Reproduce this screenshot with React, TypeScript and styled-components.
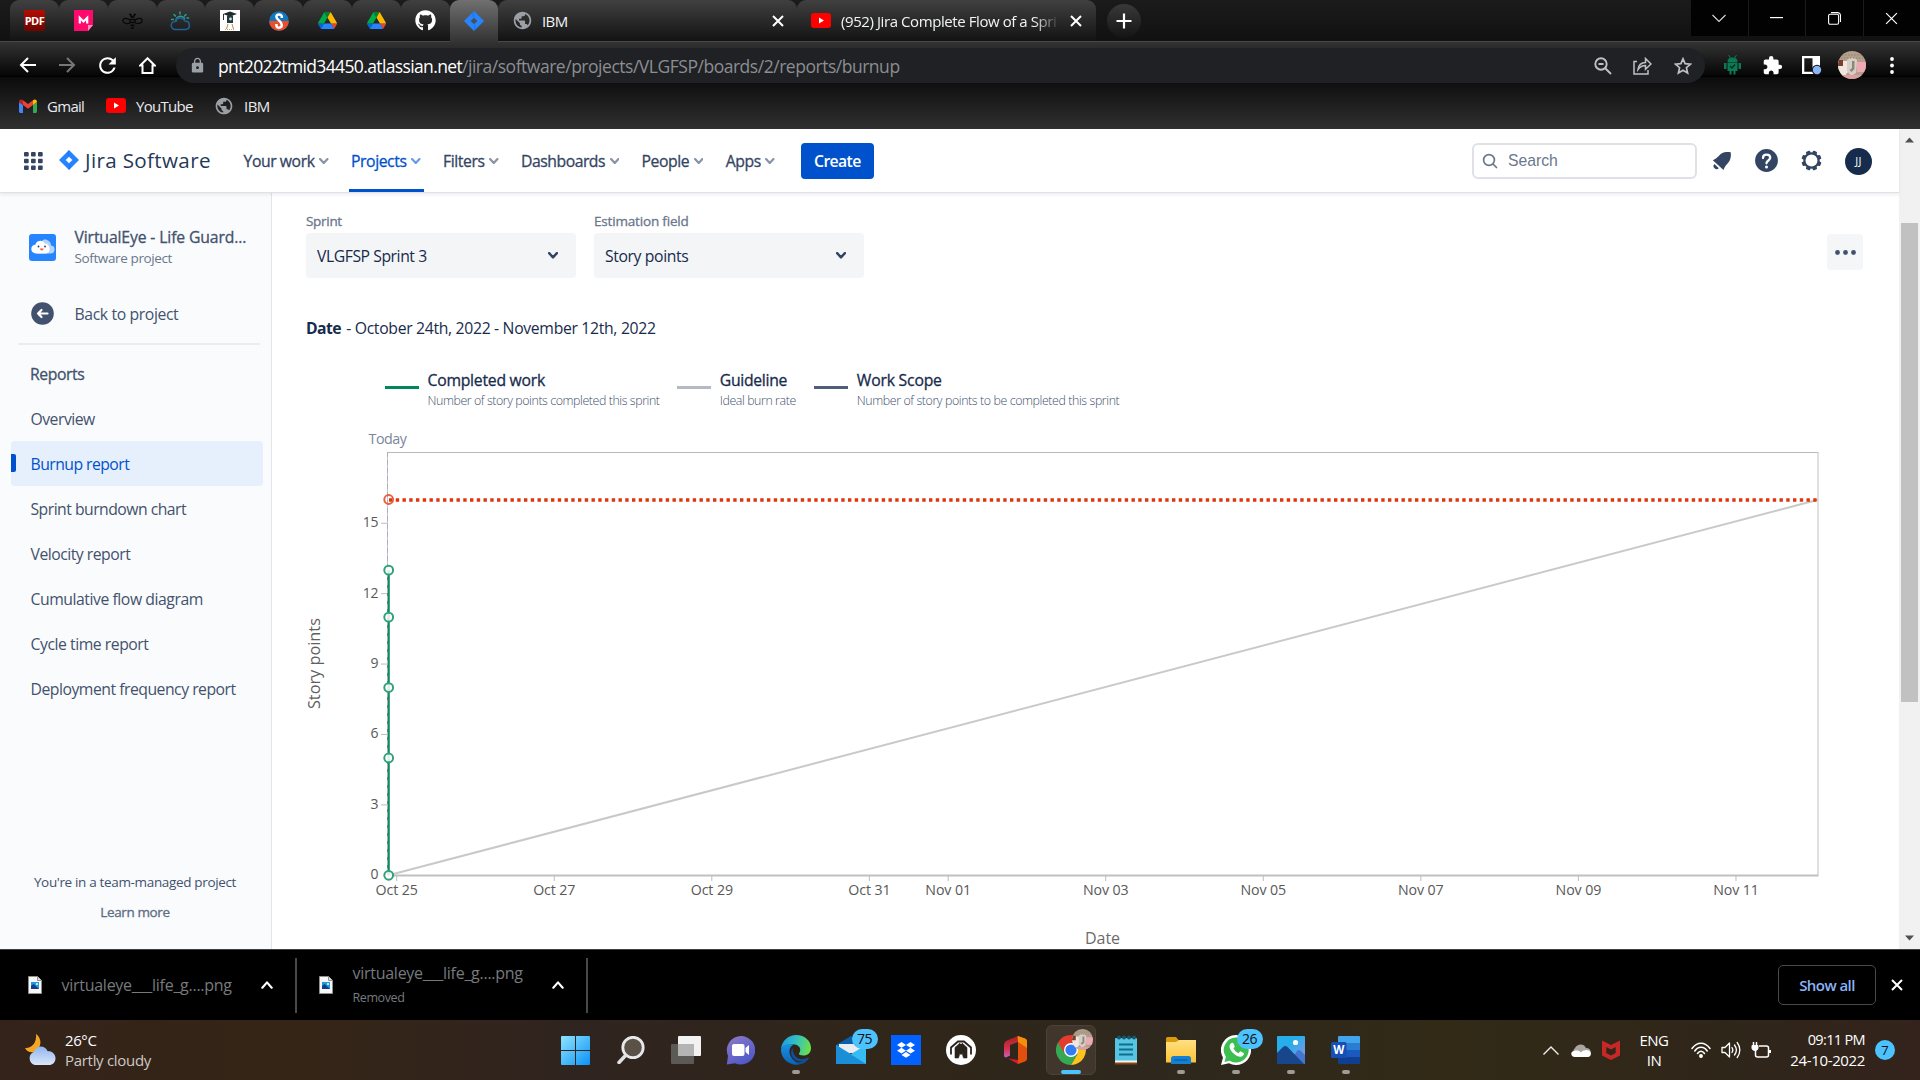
import React from 'react';
import styled, { createGlobalStyle } from 'styled-components';
import { FaGithub } from 'react-icons/fa';
import { MdExtension, MdLock, MdRefresh, MdPublic } from 'react-icons/md';

const GlobalStyle = createGlobalStyle`
  *{box-sizing:border-box}
  body{margin:0;background:#fff;overflow:hidden;font-family:"Open Sans","Noto Sans",sans-serif}
  svg{display:block;flex:none}
`;

const Screen = styled.div`width:1920px;height:1080px;display:flex;flex-direction:column;overflow:hidden;`;

const Text = styled.span<{ size?: number; ls?: number; weight?: number; color?: string }>`
  font-size:${p => p.size ?? 15.75}px;
  letter-spacing:${p => p.ls ?? 0}px;
  font-weight:${p => p.weight ?? 400};
  -webkit-text-stroke:${p => (p.weight === 500 ? 0.3 : 0)}px;
  color:${p => p.color ?? '#42526E'};
  white-space:pre;
  line-height:20px;
`;

/* ---------- Browser chrome ---------- */
const TabStrip = styled.div`
  height:42px;display:flex;align-items:stretch;padding-left:10px;
  background:linear-gradient(#1b1b1b,#111);border-bottom:1px solid #474747;
`;
const PinnedTab = styled.div<{ active?: boolean; last?: boolean }>`
  width:48.85px;display:flex;align-items:center;justify-content:center;position:relative;
  border-radius:9px 9px 0 0;height:${p => (p.active ? 42 : 41)}px;
  background:${p => (p.active ? 'linear-gradient(#707070,#333)' : 'linear-gradient(#404040,#131313)')};
  &::after{content:'';display:${p => (p.active || p.last ? 'none' : 'block')};position:absolute;right:-1px;top:9px;width:1px;height:26px;background:#646464}
`;
const WideTab = styled.div<{ divided?: boolean }>`
  width:298.6px;display:flex;align-items:center;padding:0 13.5px 0 14px;position:relative;height:41px;
  border-radius:9px 9px 0 0;background:linear-gradient(#404040,#131313);
  &::after{content:'';display:${p => (p.divided ? 'block' : 'none')};position:absolute;right:-1px;top:9px;width:1px;height:26px;background:#646464}
`;
const TabTitle = styled.div<{ fade?: boolean }>`
  width:219px;margin-left:${p => (p.fade ? 10 : 8.5)}px;overflow:hidden;display:flex;
  mask-image:${p => (p.fade ? 'linear-gradient(90deg,#000 88%,transparent)' : 'none')};
`;
const TabClose = styled.div`margin-left:auto;`;
const NewTab = styled.div`
  width:34px;height:34px;border-radius:50%;margin:4px 0 0 11px;display:flex;align-items:center;justify-content:center;
  background:linear-gradient(#393939,#141414);
`;
const WindowControls = styled.div`margin-left:auto;display:flex;gap:1px;height:36px;background:#1b1b1b;`;
const WindowButton = styled.div`width:56.5px;background:#020202;display:flex;align-items:center;justify-content:center;`;

const Toolbar = styled.div`
  height:35px;display:flex;align-items:center;background:linear-gradient(#333,#050505);
  border-bottom:1px solid #000;padding:12px 0 0 7.5px;
`;
const ToolSlot = styled.div`width:40px;height:40px;display:flex;align-items:center;justify-content:center;position:relative;`;
const UrlBar = styled.div`
  height:35px;width:1529px;margin:1px 0 0 8px;border-radius:18px;background:#202124;
  display:flex;align-items:center;position:relative;padding-left:13.5px;flex:none;
`;
const UrlText = styled.div`display:flex;margin-left:12px;`;
const UrlActions = styled.div`margin-left:auto;display:flex;margin-right:2px;`;
const Extensions = styled.div`display:flex;margin-left:7.5px;`;
const Bookmarks = styled.div`
  height:52px;display:flex;align-items:center;padding:5px 0 0 19px;
  background:linear-gradient(#0b0b0b,#303030);
`;
const Bookmark = styled.div<{ w: number }>`width:${p => p.w}px;display:flex;align-items:center;gap:10px;`;
const ProfilePhoto = styled.div<{ d: number }>`
  width:${p => p.d}px;height:${p => p.d}px;border-radius:50%;overflow:hidden;flex:none;
`;

/* ---------- Jira ---------- */
const Viewport = styled.div`height:820px;display:flex;background:#fff;`;
const Site = styled.div`width:1899px;display:flex;flex-direction:column;`;
const Header = styled.header`
  height:64px;display:flex;align-items:center;padding-left:24px;position:relative;z-index:1;background:#fff;
  border-bottom:1px solid #DFE1E6;box-shadow:0 2px 3px rgba(9,30,66,.07);
`;
const Brand = styled.div`display:flex;align-items:center;gap:6px;margin:0 0 1px 16px;width:182px;`;
const Nav = styled.nav`display:flex;height:63px;gap:16.5px;`;
const NavItem = styled.div<{ active?: boolean }>`
  display:flex;align-items:center;gap:4.5px;padding:4px 3.5px 0 2.5px;height:63px;
  border-bottom:3px solid ${p => (p.active ? '#0052CC' : 'transparent')};
`;
const CreateButton = styled.div`
  width:73px;height:36px;border-radius:4px;background:#0052CC;display:flex;align-items:center;justify-content:center;margin-left:22.5px;
`;
const SearchBox = styled.div`
  width:225px;height:36px;border:2px solid #DFE1E6;border-radius:6px;display:flex;align-items:center;
  gap:10px;padding-left:8px;margin-left:auto;font-family:"Liberation Sans",Arial,sans-serif;
`;
const HeaderIcons = styled.div`display:flex;margin-left:3px;`;
const HeaderIcon = styled.div`width:44.7px;height:36px;display:flex;align-items:center;justify-content:center;`;
const UserBadge = styled.div`
  width:27px;height:27px;border-radius:50%;background:#172B4D;display:flex;align-items:center;justify-content:center;
  margin:1px 27px 0 11px;
`;

const Body = styled.div`height:756px;display:flex;`;
const Sidebar = styled.aside`
  width:272px;background:#FAFBFC;border-right:1px solid #E3E4E8;display:flex;flex-direction:column;padding:27px 8px 0 11px;
`;
const ProjectHead = styled.div`display:flex;height:54px;padding:1px 0 0 18px;align-items:center;gap:18.5px;`;
const ProjectNames = styled.div`display:flex;flex-direction:column;gap:1.5px;`;
const BackRow = styled.div`display:flex;align-items:center;gap:20.5px;height:44px;margin-top:17.5px;padding-left:20px;`;
const Divider = styled.div`height:2px;background:#EBECF0;margin:7.5px 3px 0 7px;`;
const SideTitle = styled.div`height:45px;display:flex;align-items:center;padding-left:19px;margin:6px 0 0;`;
const SideItem = styled.div<{ active?: boolean }>`
  height:45px;display:flex;align-items:center;padding-left:19.5px;border-radius:4px;position:relative;
  background:${p => (p.active ? '#E6EFFC' : 'transparent')};
  &::before{content:'';display:${p => (p.active ? 'block' : 'none')};position:absolute;left:0;top:13px;width:5px;height:18px;background:#0052CC;border-radius:0 2px 2px 0}
`;
const SideFooter = styled.div`margin-top:auto;display:flex;flex-direction:column;align-items:center;gap:10px;padding:0 4px 27px 0;`;

const Main = styled.main`flex:1;padding:18px 36px 0 34px;display:flex;flex-direction:column;overflow:hidden;`;
const Filters = styled.div`display:flex;gap:18px;height:67px;`;
const Field = styled.div`width:270px;display:flex;flex-direction:column;gap:2px;`;
const Select = styled.div`
  height:45px;border-radius:4px;background:#F4F5F7;display:flex;align-items:center;justify-content:space-between;padding:0 18px 0 11px;
`;
const MoreButton = styled.div`
  width:36px;height:36px;border-radius:4px;background:#F5F6F8;margin:23px 0 0 auto;display:flex;align-items:center;justify-content:center;
`;
const DateLine = styled.div`height:20px;display:flex;gap:1.5px;margin-top:40px;`;
const Legend = styled.div`display:flex;height:50px;margin:32px 0 0 79px;`;
const LegendItem = styled.div<{ w: number }>`display:flex;width:${p => p.w}px;`;
const Swatch = styled.div<{ c: string }>`width:34px;height:3px;background:${p => p.c};margin:16px 8.5px 0 0;flex:none;`;
const LegendText = styled.div`display:flex;flex-direction:column;gap:.5px;`;
const ChartWrap = styled.div`margin:4px 0 0 -6px;height:525px;overflow:hidden;`;

const ScrollTrack = styled.div`
  width:21px;background:#F1F1F1;display:flex;flex-direction:column;align-items:center;justify-content:space-between;padding:8px 0;
`;
const ScrollThumb = styled.div`width:17px;height:479px;background:#C1C1C1;margin-bottom:154px;`;

/* ---------- Downloads shelf ---------- */
const Shelf = styled.div`height:71px;background:#000;border-top:1px solid #3c4043;display:flex;align-items:center;`;
const Download = styled.div<{ w: number; pad: number }>`
  width:${p => p.w}px;height:55px;padding-left:${p => p.pad}px;border-right:2px solid #494949;display:flex;align-items:center;
`;
const DownloadText = styled.div`width:199px;margin-left:19.5px;display:flex;flex-direction:column;gap:5px;`;
const ShowAll = styled.div`
  width:98px;height:40px;border:1px solid #47494d;border-radius:5px;margin:0 15px 0 auto;display:flex;align-items:center;justify-content:center;
`;
const ShelfClose = styled.div`width:29px;`;

/* ---------- Taskbar ---------- */
const Taskbar = styled.div`
  height:60px;display:flex;align-items:center;
  background:linear-gradient(90deg,#33231a 0,#352516 15%,#302420 30%,#302619 48%,#2d271d 60%,#322a17 75%,#2f261a 90%,#33231c 100%);
`;
const Weather = styled.div`width:548px;display:flex;align-items:center;padding-left:25px;gap:9px;`;
const Lines = styled.div<{ align?: string }>`display:flex;flex-direction:column;align-items:${p => p.align ?? 'flex-start'};`;
const Apps = styled.div`display:flex;width:825px;`;
const AppSlot = styled.div<{ active?: boolean }>`
  width:50px;height:50px;margin:0 2.5px;border-radius:6px;display:flex;align-items:center;justify-content:center;position:relative;
  background:${p => (p.active ? '#40362b' : 'transparent')};
  border:1px solid ${p => (p.active ? '#4b4136' : 'transparent')};
`;
const RunMark = styled.div<{ wide?: boolean }>`
  position:absolute;bottom:0;width:${p => (p.wide ? 20 : 8)}px;height:4px;border-radius:2px;background:${p => (p.wide ? '#4CC2FF' : '#9e9a95')};
`;
const CountBadge = styled.div`
  position:absolute;top:3px;right:-3px;width:26px;height:20px;border-radius:10px;background:#4CC2FF;display:flex;align-items:center;justify-content:center;
`;
const PhotoBadge = styled.div`position:absolute;top:3px;right:2px;`;
const Tray = styled.div`margin-left:auto;display:flex;align-items:center;`;
const TraySlot = styled.div<{ w: number; end?: boolean }>`width:${p => p.w}px;display:flex;justify-content:${p => (p.end ? 'flex-end' : 'center')};`;
const Notice = styled.div`
  width:20px;height:20px;border-radius:50%;background:#4CC2FF;margin:0 25px 0 10px;display:flex;align-items:center;justify-content:center;
`;

/* ---------- Icons ---------- */
const Cross = ({ s = 11, w = 2, c = '#fff' }) => (
  <svg width={s} height={s} viewBox="0 0 12 12" stroke={c} strokeWidth={w}><path d="M1 1 11 11M11 1 1 11" /></svg>
);
const Chevron = ({ c = '#8993A4', up = false, s = 9.5, w = 2.1 }) => (
  <svg width={s} height={s * 0.67} viewBox="0 0 9 6" fill="none" stroke={c} strokeWidth={w} strokeLinecap="round" strokeLinejoin="round">
    <path d={up ? 'M1 5 4.5 1 8 5' : 'M1 1 4.5 4.8 8 1'} />
  </svg>
);
const PdfIcon = () => (
  <svg width="21" height="21" viewBox="0 0 21 21">
    <defs><linearGradient id="pdf" x2="0" y2="1"><stop stopColor="#b50d02" /><stop offset="1" stopColor="#6e0400" /></linearGradient></defs>
    <rect width="21" height="21" rx="2" fill="url(#pdf)" />
    <text x="10.5" y="15" textAnchor="middle" fontSize="11" fontWeight="700" fill="#fff" letterSpacing="-.5">PDF</text>
  </svg>
);
const MIcon = () => (
  <svg width="21" height="21" viewBox="0 0 21 21">
    <path d="M1 0h19v15l-5 6H1z" fill="#ff0a6c" /><path d="M20 15h-5v6z" fill="#ff8fb8" />
    <path d="M6.800 13.500V7.800l3.700 3.700 3.700-3.700v5.700" fill="none" stroke="#fff" strokeWidth="2.200" />
  </svg>
);
const BeeIcon = () => (
  <svg width="21" height="16" viewBox="0 0 21 16" fill="none" stroke="#080808" strokeWidth="1.300">
    <ellipse cx="4.5" cy="8" rx="3.700" ry="2.400" transform="rotate(12 4.500 8)" /><ellipse cx="16.500" cy="8" rx="3.700" ry="2.400" transform="rotate(-12 16.500 8)" />
    <path d="M8 6.500h5M8 9.500h5M8.500 12.300h4M9 15h3M8.500 3.800h4M7.500.800l2 2M13.500.800l-2 2" strokeWidth="1.700" />
  </svg>
);
const SunCloudIcon = () => (
  <svg width="21" height="20" viewBox="0 0 21 20" fill="none" strokeWidth="1.500" strokeLinecap="round">
    <path d="M6 10a4.600 4.600 0 0 1 8.500-2.500M10 1v2M4 3.500l1.400 1.400M16 3.500l-1.400 1.400M1.500 8.500h1.800M17 7h1.600" stroke="#2a9d8f" />
    <path d="M5.500 18.500a4 4 0 0 1-.5-8 5.500 5.500 0 0 1 10-.5 4.300 4.300 0 0 1 1 8.500z" stroke="#1f6299" />
  </svg>
);
const GradIcon = () => (
  <svg width="20" height="21" viewBox="0 0 20 21">
    <rect width="20" height="21" fill="#fff" /><path d="M3 4l7-2.500L17 4l-7 2.500z" fill="#1f2b2b" />
    <path d="M7 5.500h6V13H7z" fill="#243a3c" /><path d="M3.500 4v6" stroke="#243a3c" /><circle cx="10.500" cy="9" r="1.400" fill="#cfe7e4" />
    <path d="M8 14l-1.500 5M12 14l1.500 5" stroke="#b98a54" /><path d="M5 19.500h10" stroke="#d9a35c" strokeDasharray="1 1" />
  </svg>
);
const SIcon = () => (
  <svg width="20" height="20" viewBox="0 0 20 20">
    <circle cx="10" cy="10" r="9.800" fill="#1377bd" /><path d="M.2 10a9.800 9.800 0 0 0 19.600 0z" fill="#e8502c" />
    <path d="M12.800 7V5.500C12.800 2.700 7.400 2.700 7.400 5.700 7.400 9 12.800 10 12.800 14c0 3.500-5.400 3.500-5.400.5v-1.500" fill="none" stroke="#fff" strokeWidth="2.500" />
  </svg>
);
const DriveIcon = () => (
  <svg width="19" height="17" viewBox="0 0 87.300 78">
    <path d="m6.600 66.850 3.850 6.650c.8 1.400 1.950 2.500 3.300 3.300l13.750-23.800h-27.500c0 1.550.4 3.100 1.200 4.500z" fill="#0066da" />
    <path d="m43.650 25-13.750-23.800c-1.350.8-2.500 1.900-3.300 3.300l-25.400 44a9.060 9.060 0 0 0 -1.200 4.500h27.500z" fill="#00ac47" />
    <path d="m73.550 76.800c1.350-.8 2.500-1.900 3.300-3.300l1.600-2.750 7.650-13.250c.8-1.400 1.200-2.950 1.200-4.500h-27.500l5.850 11.500z" fill="#ea4335" />
    <path d="m43.650 25 13.750-23.800c-1.350-.8-2.900-1.200-4.500-1.200h-18.500c-1.600 0-3.150.45-4.500 1.200z" fill="#00832d" />
    <path d="m59.800 53h-32.300l-13.750 23.800c1.350.8 2.900 1.200 4.500 1.200h50.800c1.600 0 3.150-.45 4.500-1.200z" fill="#2684fc" />
    <path d="m73.400 26.500-12.700-22c-.8-1.400-1.950-2.500-3.300-3.300l-13.750 23.800 16.150 28h27.450c0-1.550-.4-3.100-1.200-4.500z" fill="#ffba00" />
  </svg>
);
const JiraMark = ({ s = 20, hole = '#fff' }) => (
  <svg width={s} height={s} viewBox="0 0 20 20">
    <path d="M10 0 20 10 10 20 0 10z" fill="#2684FF" />
    <path d="M10 6.500c-2-2-2-4.500 0-6.500v6.500z" fill="#1a6be0" opacity=".6" /><path d="M10 13.500c2 2 2 4.500 0 6.500z" fill="#1a6be0" opacity=".6" />
    <path d="M10 6.700 13.300 10 10 13.300 6.700 10z" fill={hole} />
  </svg>
);
const YouTubeIcon = () => (
  <svg width="20" height="15" viewBox="0 0 20 15"><rect width="20" height="15" rx="3" fill="#f00" /><path d="M8 4.500l5 3-5 3z" fill="#fff" /></svg>
);
const GmailIcon = () => (
  <svg width="18" height="14" viewBox="0 0 18 14">
    <path d="M0 3v9.500C0 13.300.7 14 1.500 14H4V6z" fill="#4285f4" /><path d="M18 3v9.500c0 .8-.7 1.500-1.500 1.500H14V6z" fill="#34a853" />
    <path d="M4 1.200 9 5l5-3.800V6L9 9.800 4 6z" fill="#ea4335" /><path d="M0 3C0 .5 2.300-.2 4 1.200V6L0 3z" fill="#c5221f" />
    <path d="M18 3c0-2.500-2.300-3.200-4-1.800V6l4-3z" fill="#fbbc04" />
  </svg>
);
const Face = ({ d }: { d: number }) => (
  <ProfilePhoto d={d}>
    <svg width={d} height={d} viewBox="0 0 28 28">
      <rect width="28" height="28" fill="#b3a08c" /><path d="M0 10h9l2 10-7 8H0z" fill="#efe6e0" /><path d="M0 9h5v6H0z" fill="#7a3f2c" />
      <path d="M18 11h10v10h-9z" fill="#efa9b4" /><path d="M9 9c3-3 7-3 10 0l-1 13-5 3-4-5z" fill="#d6cfc6" />
      <path d="M14 10h2.500v8l-3 3-2-2 2.500-2z" fill="#8f8678" /><path d="M4 24h20v4H4z" fill="#dca0a4" />
      <path d="M4 4h20M3 7h22" stroke="#938069" strokeDasharray="1.500 1.500" />
    </svg>
  </ProfilePhoto>
);
const ImageFileIcon = () => (
  <svg width="14" height="18" viewBox="0 0 14 18">
    <path d="M.5.500h9l4 4v13H.5z" fill="#f7f7f7" stroke="#8f8f8f" /><path d="M9.500.500v4h4" fill="#ddd" stroke="#8f8f8f" />
    <rect x="3" y="6" width="8" height="7" fill="#1d9be0" /><path d="M3 13V10l2.500-2L11 13z" fill="#153f82" /><circle cx="9" cy="8" r="1" fill="#fff" />
  </svg>
);

const navItems: [string, number][] = [['Your work', -0.43], ['Projects', -0.42], ['Filters', -0.42], ['Dashboards', -0.48], ['People', -0.42], ['Apps', -0.42]];
const sideItems: [string, number][] = [
  ['Overview', -0.5], ['Burnup report', -0.54], ['Sprint burndown chart', -0.52], ['Velocity report', -0.5],
  ['Cumulative flow diagram', -0.45], ['Cycle time report', -0.46], ['Deployment frequency report', -0.49],
];
const pinned = [PdfIcon, MIcon, BeeIcon, SunCloudIcon, GradIcon, SIcon, DriveIcon, DriveIcon, () => <FaGithub size={21} color="#fff" />];

const Burnup = () => {
  // viewBox uses the page grid, so data coordinates map straight to pixels
  const y = (v: number) => 875.3 - v * 23.47;
  const x = (day: number) => 396.7 + day * 78.78;
  const xTicks: [string, number][] = [['Oct 25', 0], ['Oct 27', 2], ['Oct 29', 4], ['Oct 31', 6], ['Nov 01', 7], ['Nov 03', 9], ['Nov 05', 11], ['Nov 07', 13], ['Nov 09', 15], ['Nov 11', 17]];
  return (
    <svg width="1540" height="525" viewBox="300 424 1540 525" fill="none">
      <text x="387.500" y="443.500" textAnchor="middle" fontSize="14.300" letterSpacing="-.5" fill="#7A869A">Today</text>
      <path d="M387.500 452.500H1818.500" stroke="#b9b9b9" />
      <path d="M1818 452.500V875" stroke="#d6d6d6" strokeWidth="1.500" />
      <path d="M387 875.500H1818.500" stroke="#c0c0c0" strokeWidth="2" />
      <path d="M387.500 452V875" stroke="#c4c6ca" />
      <path d={`M388.500 ${y(0)}L1818 ${y(16)}`} stroke="#c9c9c9" strokeWidth="2" />
      <path d={`M388.500 ${y(13)}V${y(0)}`} stroke="#12895f" strokeWidth="2.600" />
      <path d="M387.500 452V875" stroke="#a9afba" strokeDasharray="5 3" />
      <path d={`M389 ${y(16) + 0.2}H1818`} stroke="#DE350B" strokeWidth="3.300" strokeDasharray="3.375 3.375" />
      {[0, 5, 8, 11, 13].map(v => (
        <circle key={v} cx="388.700" cy={y(v)} r="4.400" fill="#fff" fillOpacity=".85" stroke="#2fa27b" strokeWidth="2" />
      ))}
      <circle cx="388.700" cy={y(16) - 0.3} r="4.400" stroke="#e8603f" strokeWidth="2" />
      {[0, 3, 6, 9, 12, 15].map(v => (
        <g key={v}>
          {v > 0 && <path d={`M381 ${y(v)}h6`} stroke="#bdbdbd" />}
          <text x="378" y={y(v) + 4} textAnchor="end" fontSize="14" letterSpacing="-.4" fill="#595959">{v}</text>
        </g>
      ))}
      {xTicks.map(([label, d]) => (
        <g key={label}>
          <path d={`M${x(d)} 876v5`} stroke="#bdbdbd" />
          <text x={x(d)} y="895" textAnchor="middle" fontSize="14.200" letterSpacing="-.1" fill="#595959">{label}</text>
        </g>
      ))}
      <text transform="translate(320 663.600) rotate(-90)" textAnchor="middle" fontSize="16.300" fill="#5f5f5f">Story points</text>
      <text x="1102.500" y="943.500" textAnchor="middle" fontSize="16" fill="#6b6b6b">Date</text>
    </svg>
  );
};

const appIcons: { key: string; icon: React.ReactNode; run?: boolean; active?: boolean; count?: string }[] = [
  { key: 'start', icon: (
    <svg width="29" height="29" viewBox="0 0 29 29">
      <defs><linearGradient id="win" x2="1" y2="1"><stop stopColor="#8fe4ff" /><stop offset="1" stopColor="#0a93f5" /></linearGradient></defs>
      <path d="M0 1a1 1 0 0 1 1-1h13v14H0zM15 0h13a1 1 0 0 1 1 1v13H15zM0 15h14v14H1a1 1 0 0 1-1-1zM15 15h14v13a1 1 0 0 1-1 1H15z" fill="url(#win)" />
    </svg>) },
  { key: 'search', icon: (
    <svg width="28" height="28" viewBox="0 0 28 28"><circle cx="16" cy="11.500" r="10.200" fill="#5a5147" stroke="#e6e8ea" strokeWidth="2.800" /><path d="M8.500 19.500 2 26.500" stroke="#dfe2e5" strokeWidth="3.500" strokeLinecap="round" /></svg>) },
  { key: 'views', icon: (
    <svg width="30" height="28" viewBox="0 0 30 28"><rect y="8" width="23" height="20" rx="1" fill="#5c5a57" /><rect x="7" width="23" height="20" rx="1" fill="#f2f2f2" /><path d="M7 8h16v12H7z" fill="#b4b4b4" /></svg>) },
  { key: 'chat', icon: (
    <svg width="29" height="29" viewBox="0 0 29 29">
      <defs><linearGradient id="chat" x2=".6" y2="1"><stop stopColor="#8f7ac5" /><stop offset="1" stopColor="#5059c9" /></linearGradient></defs>
      <path d="M15 0a14.300 14.300 0 1 1-6 27.300L.8 28.500 2 20A14.300 14.300 0 0 1 15 0z" fill="url(#chat)" />
      <rect x="6" y="8" width="12.500" height="12" rx="2" fill="#fff" /><path d="M19.500 12 23 9v10l-3.500-3z" fill="#fff" />
    </svg>) },
  { key: 'edge', run: true, icon: (
    <svg width="30" height="30" viewBox="0 0 30 30">
      <defs>
        <linearGradient id="eg" x1="0" y1=".3" x2="1" y2=".5"><stop stopColor="#1b9de2" /><stop offset=".5" stopColor="#35c1c0" /><stop offset="1" stopColor="#6be04a" /></linearGradient>
        <linearGradient id="eb" x2="0" y2="1"><stop stopColor="#1793e6" /><stop offset="1" stopColor="#0b63b5" /></linearGradient>
      </defs>
      <path d="M0 14C1 5 8 0 15 0c9 0 15 6 15 13 0 5-3.500 7.500-7.500 7.500-3 0-5-1-4.500-2 2.500-3 1.500-8-4-9C8 8.500 2 10 0 14z" fill="url(#eg)" />
      <path d="M0 14c2-4.500 8-6 13-4.500-3 1-5 4-4.500 8 .8 6 6 10 11 11.500A15 15 0 0 1 0 14z" fill="url(#eb)" />
      <path d="M11.500 13c-4 6 1 14 9 13.500 3 0 5.500-2 6.500-4-6 3.500-15 2-15.500-9.500z" fill="#104f9c" /><path d="M20 29c3.500-.8 6.500-3 8-6l-1-.5c-3 4-8 5.500-13 4.500 1.500 1.500 3.500 2.300 6 2z" fill="#10509b" />
    </svg>) },
  { key: 'mail', count: '75', icon: (
    <svg width="30" height="28" viewBox="0 0 30 28"><path d="M0 9 15 0l15 9v8H0z" fill="#0b5ea8" /><path d="M3 8h24v9H3z" fill="#e9edf2" /><path d="M0 9l15 9 15-9v19H0z" fill="#35bdf2" /><path d="M0 9l30 19H0z" fill="#1a8fd8" /></svg>) },
  { key: 'dropbox', icon: (
    <svg width="30" height="30" viewBox="0 0 30 30"><rect width="30" height="30" fill="#0061ff" /><path d="M10.500 7l4.500 2.900-4.500 2.900L6 9.900zM19.500 7 24 9.900l-4.500 2.900L15 9.900zM10.500 12.800l4.500 2.900-4.500 2.900L6 15.700zM19.500 12.800l4.500 2.900-4.500 2.900-4.500-2.900zM15 17l4.500 2.900-4.500 2.900-4.500-2.900z" fill="#fff" /></svg>) },
  { key: 'arch', icon: (
    <svg width="30" height="30" viewBox="0 0 30 30" fill="none" stroke="#2b241c"><circle cx="15" cy="15" r="15" fill="#fff" stroke="none" /><path d="M5 19.500V12.500L12 6.500h6l7 6v7" strokeWidth="1.800" /><path d="M9 23V12.500L14 8v10l-1.500 5zM21 23V12.500L16 8v10l1.500 5z" fill="#2b241c" strokeWidth=".6" /><path d="M14 9h2v11l-1-1-1 1z" fill="#2b241c" stroke="none" /></svg>) },
  { key: 'office', icon: (
    <svg width="23" height="28" viewBox="0 0 23 28">
      <defs><linearGradient id="of" x2="0" y2="1"><stop stopColor="#a8201f" /><stop offset=".6" stopColor="#d6324f" /><stop offset="1" stopColor="#c661b8" /></linearGradient></defs>
      <path d="M14 0 3 4.500C1 5.500 0 7 0 9v10c0 2 1.500 3 3 2l3-1.500V9l8-3z" fill="url(#of)" /><path d="M13 0l8 2.500c1 .5 2 1.500 2 2.500v18c0 1-1 2-2 2.500L14 28V6z" fill="#e2500d" /><path d="M14 0l7 2.500c1 .5 2 1.500 2 2.500v7l-9-6z" fill="#f2900c" /><path d="M4 22.500 14 24v4z" fill="#e0182d" />
    </svg>) },
  { key: 'chrome', active: true, icon: (
    <svg width="30" height="30" viewBox="0 0 30 30"><path d="M2 7.500A15 15 0 0 0 15 30l6.500-11.200L15 15z" fill="#34a853" /><path d="M15 8h13.200A15 15 0 0 1 15 30l6.500-11z" fill="#fcc31e" /><path d="M2 7.500A15 15 0 0 1 28.200 8H15L8.500 18.500z" fill="#e33b2e" /><circle cx="15" cy="15" r="7" fill="#fff" /><circle cx="15" cy="15" r="5.600" fill="#2f7df6" /></svg>) },
  { key: 'notepad', icon: (
    <svg width="22" height="30" viewBox="0 0 22 30"><rect y="3" width="22" height="26" rx="1" fill="#56c4e2" /><path d="M0 26h22v3.500H0z" fill="#8b4513" /><path d="M0 25.500h22v2H0z" fill="#f4f4f4" /><g fill="#14586f"><circle cx="4" cy="2.500" r="2" /><circle cx="9" cy="2.500" r="2" /><circle cx="14" cy="2.500" r="2" /><circle cx="19" cy="2.500" r="2" /></g><path d="M4 9.500h14M4 14.500h14M4 19.500h14" stroke="#0f6e8c" strokeWidth="2" /></svg>) },
  { key: 'folder', run: true, icon: (
    <svg width="30" height="27" viewBox="0 0 30 27">
      <defs><linearGradient id="fo" x2="0" y2="1"><stop stopColor="#ffe083" /><stop offset="1" stopColor="#fbc334" /></linearGradient></defs>
      <path d="M0 1.500A1.500 1.500 0 0 1 1.500 0H10l3 3.500V8H0z" fill="#d99a0b" /><path d="M0 5h10l3-2h17v22.500H0z" fill="url(#fo)" /><path d="M5 27v-5.500c0-1.500 1-2.500 2.500-2.500h15c1.500 0 2.500 1 2.500 2.500V27z" fill="#1380d6" /><path d="M8.500 23h13" stroke="#0a5a9e" strokeWidth="1.200" />
    </svg>) },
  { key: 'whatsapp', run: true, count: '26', icon: (
    <svg width="30" height="30" viewBox="0 0 30 30"><path d="M15 0a15 15 0 1 1-7 28.200L0 30l2-7.500A15 15 0 0 1 15 0z" fill="#fff" /><path d="M15 2.500a12.500 12.500 0 1 1-6.300 23.200L3.500 27l1.400-5A12.500 12.500 0 0 1 15 2.500z" fill="#3cbf50" /><path d="M10.500 8c-3 2-2.500 6 1.500 10s8.500 5 10.500 2c.6-1.200.5-1.800-.3-2.200l-3-1.500-1.700 1.900c-2.500-1-4-2.600-5-4.900l1.300-1.600-1.300-3.200c-.4-.8-1.200-.9-2-.5z" fill="#fff" /></svg>) },
  { key: 'photos', run: true, icon: (
    <svg width="28" height="28" viewBox="0 0 28 28">
      <defs><linearGradient id="ph" x2="1" y2="1"><stop offset=".4" stopColor="#27aeea" /><stop offset="1" stopColor="#a58be8" /></linearGradient></defs>
      <rect width="28" height="28" rx="1" fill="url(#ph)" /><path d="M12 28 20 15c1.500-1.500 2.500-1.500 4 0l4 4v9z" fill="#4377cf" /><path d="M0 17l6-6c1.500-1.500 3-1.500 4.500 0L27 28H0z" fill="#18468c" /><circle cx="18.500" cy="6.500" r="2.600" fill="#fff" />
    </svg>) },
  { key: 'word', run: true, icon: (
    <svg width="29" height="28" viewBox="0 0 29 28"><rect x="7" width="22" height="28" rx="1" fill="#103f91" /><path d="M7 7h22v7H7z" fill="#2b7cd3" /><path d="M7 1a1 1 0 0 1 1-1h20a1 1 0 0 1 1 1v6H7z" fill="#41a5ee" /><path d="M7 14h22v7H7z" fill="#185abd" /><rect y="6" width="15.500" height="16" rx="1.500" fill="#1650b5" /><text x="7.700" y="18" textAnchor="middle" fontSize="11.500" fontWeight="700" fill="#fff">W</text></svg>) },
];

export default function App() {
  return (
    <Screen>
      <GlobalStyle />
      <TabStrip>
        {pinned.map((Icon, i) => (
          <PinnedTab key={i} last={i === 8}><Icon /></PinnedTab>
        ))}
        <PinnedTab active><JiraMark s={20} hole="#4d4d4d" /></PinnedTab>
        <WideTab divided>
          <MdPublic size={21} color="#9aa0a6" />
          <TabTitle><Text size={15} ls={-0.55} color="#f1f3f4">IBM</Text></TabTitle>
          <TabClose><Cross s={12} /></TabClose>
        </WideTab>
        <WideTab>
          <YouTubeIcon />
          <TabTitle fade><Text size={15} ls={-0.42} color="#f1f3f4">(952) Jira Complete Flow of a Spri</Text></TabTitle>
          <TabClose><Cross s={12} /></TabClose>
        </WideTab>
        <NewTab><svg width="16" height="16" viewBox="0 0 16 16" stroke="#fff" strokeWidth="2.200"><path d="M8 .5v15M.5 8h15" /></svg></NewTab>
        <WindowControls>
          <WindowButton><svg width="14" height="9" viewBox="0 0 14 9" fill="none" stroke="#ddd" strokeWidth="1.100"><path d="M.5 1 7 7.500 13.500 1" /></svg></WindowButton>
          <WindowButton><svg width="13" height="2"><rect width="13" height="1.200" fill="#fff" /></svg></WindowButton>
          <WindowButton><svg width="13" height="13" viewBox="0 0 13 13" fill="none" stroke="#fff" strokeWidth="1.100"><rect x=".6" y="2.200" width="10" height="10" rx="1.500" /><path d="M3 .6h6.500a3 3 0 0 1 3 3V10" /></svg></WindowButton>
          <WindowButton><Cross s={13} w={1.1} /></WindowButton>
        </WindowControls>
      </TabStrip>

      <Toolbar>
        <ToolSlot><svg width="17" height="16" viewBox="0 0 17 16" fill="none" stroke="#fff" strokeWidth="2"><path d="M17 8H2M9 1 2 8l7 7" /></svg></ToolSlot>
        <ToolSlot><svg width="17" height="16" viewBox="0 0 17 16" fill="none" stroke="#777" strokeWidth="2"><path d="M0 8h15M8 1l7 7-7 7" /></svg></ToolSlot>
        <ToolSlot><MdRefresh size={25} color="#fff" /></ToolSlot>
        <ToolSlot><svg width="17" height="17" viewBox="0 0 17 17" fill="none" stroke="#fff" strokeWidth="2"><path d="M8.500 1.300 15.800 8.500H13.500V16h-10V8.500H1.200z" /></svg></ToolSlot>
        <UrlBar>
          <MdLock size={17} color="#9aa0a6" />
          <UrlText>
            <Text size={17.5} ls={-0.63} color="#fff">pnt2022tmid34450.atlassian.net</Text>
            <Text size={17.5} ls={-0.475} color="#8b8e92">/jira/software/projects/VLGFSP/boards/2/reports/burnup</Text>
          </UrlText>
          <UrlActions>
            <ToolSlot><svg width="18" height="18" viewBox="0 0 18 18" fill="none" stroke="#bdc1c6" strokeWidth="1.900"><circle cx="7" cy="7" r="5.700" /><path d="M11 11l6 6M4.500 7h5" /></svg></ToolSlot>
            <ToolSlot><svg width="19" height="18" viewBox="0 0 19 18" fill="none" stroke="#bdc1c6" strokeWidth="1.500"><path d="M4 4.500H1V17h14v-4M5 12.500C5.500 8.500 8 5.800 12.500 5.600V1.500L18 7l-5.500 5.300V8.500C9 8.500 7 9.800 5 12.500z" /></svg></ToolSlot>
            <ToolSlot><svg width="18" height="18" viewBox="0 0 18 18" fill="none" stroke="#bdc1c6" strokeWidth="1.700"><path d="M9 1.800l2.100 4.900 5.300.5-4 3.500 1.200 5.200L9 13.200 4.400 15.900l1.200-5.200-4-3.500 5.300-.5z" /></svg></ToolSlot>
          </UrlActions>
        </UrlBar>
        <Extensions>
          <ToolSlot><svg width="17" height="20" viewBox="0 0 17 20" fill="#0b7a55"><path d="M4 5.500C4 2 13 2 13 5.500v1H4zM4.500 0l2 3M12.500 0l-2 3" stroke="#0b7a55" /><path d="M3.500 7.500h10v8.500h-2v3.500h-2V16h-2v3.500h-2V16h-2zM0 8h2.500v6H0zM14.500 8H17v6h-2.500z" /><path d="M6 11l2 2 3-3.500" stroke="#04281c" strokeWidth="1.300" fill="none" /></svg></ToolSlot>
          <ToolSlot><MdExtension size={21} color="#fff" /></ToolSlot>
          <ToolSlot><svg width="20" height="19" viewBox="0 0 20 19"><path d="M0 0h18v18H0zM2.300 2.300v13.400h8.200V2.300z" fill="#fff" fillRule="evenodd" /><circle cx="15" cy="14" r="5.200" fill="#111" /><circle cx="15" cy="14" r="4.200" fill="#8ab4f8" /></svg></ToolSlot>
          <ToolSlot><Face d={28} /></ToolSlot>
          <ToolSlot><svg width="4" height="17" viewBox="0 0 4 17" fill="#fff"><circle cx="2" cy="2" r="1.900" /><circle cx="2" cy="8.500" r="1.900" /><circle cx="2" cy="15" r="1.900" /></svg></ToolSlot>
        </Extensions>
      </Toolbar>
      <Bookmarks>
        <Bookmark w={87}><GmailIcon /><Text size={15} ls={-0.7} color="#e8eaed">Gmail</Text></Bookmark>
        <Bookmark w={108}><YouTubeIcon /><Text size={15} ls={-0.7} color="#e8eaed">YouTube</Text></Bookmark>
        <Bookmark w={80}><MdPublic size={20} color="#9aa0a6" /><Text size={15} ls={-0.55} color="#e8eaed">IBM</Text></Bookmark>
      </Bookmarks>

      <Viewport>
        <Site>
          <Header>
            <svg width="19" height="18" viewBox="0 0 19 18" fill="#344563">
              {[0, 7, 14].map(a => [0, 6.700, 13.400].map(b => <rect key={`${a}-${b}`} x={a} y={b} width="4.700" height="4.600" rx="1" />))}
            </svg>
            <Brand><JiraMark s={20} /><Text size={20.6} ls={0.35} color="#253858">Jira Software</Text></Brand>
            <Nav>
              {navItems.map(([label, ls], i) => (
                <NavItem key={label} active={i === 1}>
                  <Text weight={500} ls={ls} color={i === 1 ? '#0052CC' : '#344563'}>{label}</Text>
                  <Chevron c={i === 1 ? '#6c9be6' : '#8993A4'} />
                </NavItem>
              ))}
            </Nav>
            <CreateButton><Text weight={600} ls={-0.6} color="#fff">Create</Text></CreateButton>
            <SearchBox>
              <svg width="16" height="16" viewBox="0 0 16 16" fill="none" stroke="#6B778C" strokeWidth="1.700"><circle cx="7" cy="7" r="5.400" /><path d="M11 11l3.500 3.500" strokeLinecap="round" /></svg>
              <Text color="#6B778C">Search</Text>
            </SearchBox>
            <HeaderIcons>
              <HeaderIcon><svg width="20" height="20" viewBox="0 0 20 20" fill="#344563"><path d="M.8 9.200C5 7.800 6.500 4.500 9.500 2.500 12.500.7 16 .8 18.700 1.200c.4 3 .3 6.200-1.400 9C15.300 13.300 13 14.500 11.500 19z" /><path d="M2.500 13 6.800 17.300A2.900 2.900 0 0 1 2.500 13z" /></svg></HeaderIcon>
              <HeaderIcon><svg width="23" height="23" viewBox="0 0 23 23"><circle cx="11.500" cy="11.500" r="11.400" fill="#344563" /><path d="M8 9c0-4.500 7.200-4.300 7.200-.2 0 2.700-3.700 2.700-3.700 5.500" fill="none" stroke="#fff" strokeWidth="2.300" strokeLinecap="round" /><circle cx="11.500" cy="18" r="1.500" fill="#fff" /></svg></HeaderIcon>
              <HeaderIcon><svg width="21" height="21" viewBox="-10.500 -10.500 21 21"><circle r="7.100" fill="none" stroke="#344563" strokeWidth="2.200" />{Array.from({ length: 8 }, (_, i) => <rect key={i} x="-2.200" y="-10" width="4.400" height="3.500" rx="1" fill="#344563" transform={`rotate(${i * 45 + 22.5})`} />)}</svg></HeaderIcon>
            </HeaderIcons>
            <UserBadge><Text size={11} ls={0.3} color="#fff">JJ</Text></UserBadge>
          </Header>
          <Body>
            <Sidebar>
              <ProjectHead>
                <svg width="27" height="27" viewBox="0 0 27 27"><rect width="27" height="27" rx="3" fill="#2684FF" /><path d="M8 19.500h13a4 4 0 0 0 1-8C22 6 15 3.500 13 7z" fill="#b3d4ff" /><path d="M7 19.500a4.500 4.500 0 0 1-.5-9C7 6.500 14 5 15.500 9.500c4 0 5.500 3.500 5 6.500-.3 2.500-2 3.500-4 3.500z" fill="#fff" /><circle cx="9.500" cy="12.500" r=".9" fill="#253858" /><circle cx="16" cy="12.500" r=".9" fill="#253858" /><path d="M11 14.500h3.500c0 2.500-3.500 2.500-3.500 0z" fill="#ff5630" /></svg>
                <ProjectNames>
                  <Text weight={500} ls={-0.14}>VirtualEye - Life Guard...</Text>
                  <Text size={13.5} ls={-0.38} color="#6B778C">Software project</Text>
                </ProjectNames>
              </ProjectHead>
              <BackRow>
                <svg width="23" height="23" viewBox="0 0 23 23" fill="none" stroke="#fff" strokeWidth="2.200" strokeLinecap="round" strokeLinejoin="round"><circle cx="11.500" cy="11.500" r="11.300" fill="#42526E" stroke="none" /><path d="M16.500 11.500H7M10.500 8 7 11.500l3.500 3.500" /></svg>
                <Text ls={-0.38}>Back to project</Text>
              </BackRow>
              <Divider />
              <SideTitle><Text weight={500} ls={-0.4}>Reports</Text></SideTitle>
              {sideItems.map(([label, ls], i) => (
                <SideItem key={label} active={i === 1}><Text ls={ls} color={i === 1 ? '#0052CC' : '#42526E'}>{label}</Text></SideItem>
              ))}
              <SideFooter>
                <Text size={13.5} ls={-0.34}>You're in a team-managed project</Text>
                <Text size={13.5} weight={500} ls={-0.38} color="#5E6C84">Learn more</Text>
              </SideFooter>
            </Sidebar>
            <Main>
              <Filters>
                <Field>
                  <Text size={13.5} weight={500} ls={-0.3} color="#6B778C">Sprint</Text>
                  <Select><Text ls={-0.45} color="#172B4D">VLGFSP Sprint 3</Text><Chevron c="#344563" s={10} w={2.2} /></Select>
                </Field>
                <Field>
                  <Text size={13.5} weight={500} ls={-0.18} color="#6B778C">Estimation field</Text>
                  <Select><Text ls={-0.39} color="#172B4D">Story points</Text><Chevron c="#344563" s={10} w={2.2} /></Select>
                </Field>
                <MoreButton><svg width="21" height="5" viewBox="0 0 21 5" fill="#42526E"><circle cx="2.500" cy="2.500" r="2.400" /><circle cx="10.500" cy="2.500" r="2.400" /><circle cx="18.500" cy="2.500" r="2.400" /></svg></MoreButton>
              </Filters>
              <DateLine>
                <Text weight={700} ls={-0.6} color="#172B4D">Date</Text>
                <Text ls={-0.32} color="#172B4D"> - October 24th, 2022 - November 12th, 2022</Text>
              </DateLine>
              <Legend>
                <LegendItem w={292.3}><Swatch c="#00875A" /><LegendText><Text weight={500} ls={-0.25} color="#172B4D">Completed work</Text><Text size={12.4} weight={300} ls={-0.42} color="#42526E">Number of story points completed this sprint</Text></LegendText></LegendItem>
                <LegendItem w={137}><Swatch c="#B3BAC5" /><LegendText><Text weight={500} ls={-0.3} color="#172B4D">Guideline</Text><Text size={12.4} weight={300} ls={-0.42} color="#42526E">Ideal burn rate</Text></LegendText></LegendItem>
                <LegendItem w={320}><Swatch c="#505F79" /><LegendText><Text weight={500} ls={-0.2} color="#172B4D">Work Scope</Text><Text size={12.4} weight={300} ls={-0.4} color="#42526E">Number of story points to be completed this sprint</Text></LegendText></LegendItem>
              </Legend>
              <ChartWrap><Burnup /></ChartWrap>
            </Main>
          </Body>
        </Site>
        <ScrollTrack>
          <svg width="9" height="6" viewBox="0 0 9 6"><path d="M0 5.500 4.500.500 9 5.500z" fill="#505050" /></svg>
          <ScrollThumb />
          <svg width="9" height="6" viewBox="0 0 9 6"><path d="M0 .500 4.500 5.500 9 .500z" fill="#505050" /></svg>
        </ScrollTrack>
      </Viewport>

      <Shelf>
        <Download w={296.5} pad={28}>
          <ImageFileIcon />
          <DownloadText><Text size={16} ls={-0.27} color="#777a7e">virtualeye___life_g....png</Text></DownloadText>
          <Chevron up c="#fff" s={12} w={1.6} />
        </Download>
        <Download w={291.5} pad={22.5}>
          <ImageFileIcon />
          <DownloadText><Text size={16} ls={-0.27} color="#777a7e">virtualeye___life_g....png</Text><Text size={12.5} ls={-0.4} color="#777a7e">Removed</Text></DownloadText>
          <Chevron up c="#fff" s={12} w={1.6} />
        </Download>
        <ShowAll><Text size={15} weight={600} ls={-0.55} color="#8ab4f8">Show all</Text></ShowAll>
        <ShelfClose><Cross s={12} /></ShelfClose>
      </Shelf>

      <Taskbar>
        <Weather>
          <svg width="31" height="32" viewBox="0 0 31 32">
            <defs><linearGradient id="cl" x2="0" y2="1"><stop stopColor="#8fb4ef" /><stop offset="1" stopColor="#dbe7fa" /></linearGradient></defs>
            <path d="M11 0c6 4 6.500 14-2 18-3.500 1-7 0-9-4 6.500.5 12-5 11-14z" fill="#f5a623" />
            <path d="M10 31a7 7 0 0 1-1-13.300C11 11 20 10.500 22.500 17c5 0 8 3.500 8 7.200 0 4-3 6.800-6.500 6.800z" fill="url(#cl)" />
          </svg>
          <Lines><Text size={15} ls={-0.4} color="#fff">26°C</Text><Text size={15} ls={-0.3} color="#cdc9c5">Partly cloudy</Text></Lines>
        </Weather>
        <Apps>
          {appIcons.map(a => (
            <AppSlot key={a.key} active={a.active}>
              {a.icon}
              {a.active && <PhotoBadge><Face d={21} /></PhotoBadge>}
              {a.count && <CountBadge><Text size={14} ls={-0.5} color="#111">{a.count}</Text></CountBadge>}
              {(a.run || a.active) && <RunMark wide={a.active} />}
            </AppSlot>
          ))}
        </Apps>
        <Tray>
          <TraySlot w={27}><svg width="16" height="9" viewBox="0 0 16 9" fill="none" stroke="#eee" strokeWidth="1.400"><path d="M.5 8.500 8 1l7.500 7.500" /></svg></TraySlot>
          <TraySlot w={34}><svg width="20" height="13" viewBox="0 0 20 13"><path d="M5 11a4 4 0 0 1-1-7C6-.5 13-1 15 4c4 0 5.500 3 4.500 6z" fill="#a9a49e" /><path d="M4 13C-.5 13-1 7.500 3 7c3-1 5-.5 7 1.500C13 5 19 5.500 19.800 9c.5 2-.8 4-2.800 4z" fill="#fff" /></svg></TraySlot>
          <TraySlot w={26}><svg width="18" height="20" viewBox="0 0 18 20" fill="none"><path d="M0 .5 9 5l9-4.500V15.500L9 20l-9-4.500z" fill="#c62828" /><path d="M4.300 7v6L9 15.500l4.700-2.500V7L9 9.500z" fill="#2f2619" /></svg></TraySlot>
          <TraySlot w={60}><Lines align="center"><Text size={15} ls={-0.5} color="#fff">ENG</Text><Text size={15} ls={-0.5} color="#fff">IN</Text></Lines></TraySlot>
          <TraySlot w={34}><svg width="20" height="16" viewBox="0 0 20 16" fill="none" stroke="#fff" strokeWidth="1.500" strokeLinecap="round"><path d="M1 6.500C6-.500 14-.500 19 6.500M3.800 9C7 4 13 4 16.200 9M6.500 11.500c2-3 5-3 7 0" /><circle cx="10" cy="14" r="1.200" fill="#fff" /></svg></TraySlot>
          <TraySlot w={26}><svg width="20" height="18" viewBox="0 0 20 18" fill="none" stroke="#fff" strokeWidth="1.300" strokeLinecap="round" strokeLinejoin="round"><path d="M1 6.500h3L8.500 2v14L4 11.500H1zM11 6.500c1 1.500 1 3.500 0 5M13.500 4c2.300 3 2.300 7 0 10M16.200 1.500c3.500 4.500 3.500 10.500 0 15" /></svg></TraySlot>
          <TraySlot w={34}><svg width="20" height="17" viewBox="0 0 20 17" fill="none" stroke="#fff" strokeWidth="1.500"><path d="M8 4h7.500a2 2 0 0 1 2 2v7a2 2 0 0 1-2 2H6.500a2 2 0 0 1-2-2V8" /><path d="M19 8v3" strokeWidth="2" /><path d="M1 3.500h6V6c0 1.500-1 2.500-3 2.500S1 7.500 1 6z" fill="#fff" strokeWidth="1" /><path d="M2.500 0v3M5.500 0v3" /></svg></TraySlot>
          <TraySlot w={87} end><Lines align="flex-end"><Text size={14.5} ls={-0.65} color="#fff">09:11 PM</Text><Text size={15} ls={-0.36} color="#fff">24-10-2022</Text></Lines></TraySlot>
          <Notice><Text size={13} color="#111">7</Text></Notice>
        </Tray>
      </Taskbar>
    </Screen>
  );
}
